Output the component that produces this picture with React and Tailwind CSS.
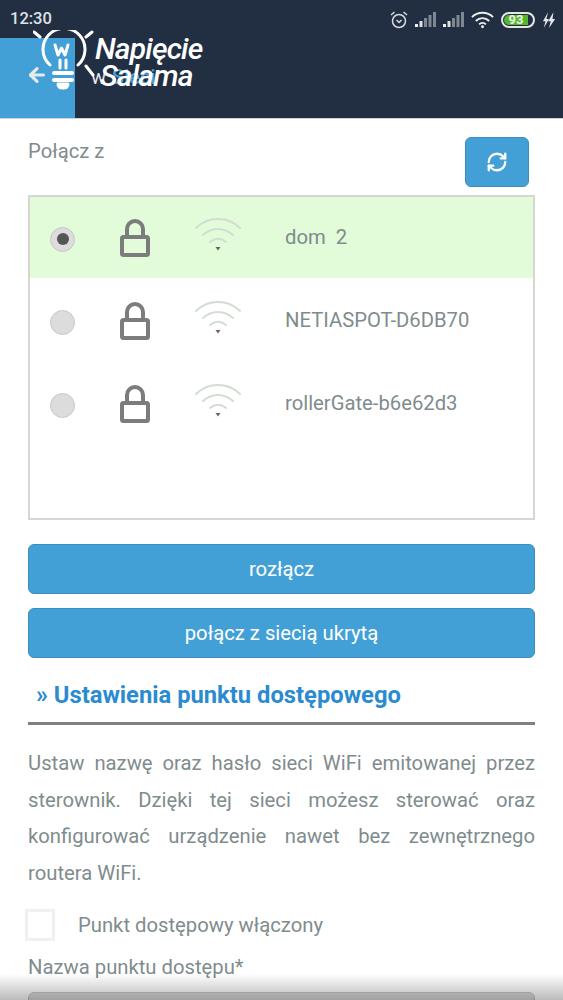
import { ArrowLeft, RefreshCw } from 'lucide-react';

const networks = [
  { name: 'dom  2', active: true },
  { name: 'NETIASPOT-D6DB70' },
  { name: 'rollerGate-b6e62d3' },
];

function Lock() {
  return (
    <svg width="30" height="38" viewBox="0 0 30 38" fill="none" stroke="#7c7c7c">
      <path d="M7 18V10a8 8 0 0 1 16 0v8" strokeWidth="4" />
      <rect x="2" y="18" width="26" height="18" rx="1.5" strokeWidth="4" />
    </svg>
  );
}

function Wifi() {
  return (
    <svg width="48" height="36" viewBox="0 0 48 36" fill="none" stroke="#d3dcd3" strokeWidth="2" strokeLinecap="round">
      <path d="M2 12C14 0 34 0 46 12" />
      <path d="M9 19c9-8 21-8 30 0" />
      <path d="M16 26c5-4 11-4 16 0" />
      <path d="M21.5 31h5l-2.5 3.5z" fill="#666" stroke="none" />
    </svg>
  );
}

function Radio({ checked }) {
  return (
    <div className="w-[25px] h-[25px] mt-[3px] rounded-full bg-[#dcdcdc] border border-[#c8c8c8] flex items-center justify-center shrink-0">
      {checked && <div className="w-[12px] h-[12px] rounded-full bg-[#555]" />}
    </div>
  );
}

function NetworkRow({ name, active }) {
  return (
    <div className={`h-[81px] mb-[2px] flex items-center pl-[20px] ${active ? 'bg-[#e2fbd9]' : 'bg-white'}`}>
      <Radio checked={active} />
      <div className="ml-[45px] w-[30px] flex">
        <Lock />
      </div>
      <div className="ml-[44px] -mt-[8px]">
        <Wifi />
      </div>
      <span className="ml-[43px] text-[20.25px] whitespace-pre text-[#7f8c8d]">{name}</span>
    </div>
  );
}

function Signal() {
  return (
    <svg width="21" height="16" viewBox="0 0 21 16" fill="#7f8792">
      <rect x="0" y="12" width="3" height="3" fill="#f0f0f0" />
      <rect x="4.5" y="9" width="3" height="6" fill="#e0e0e0" />
      <rect x="9" y="6" width="3" height="9" />
      <rect x="13.5" y="3" width="3" height="12" />
      <rect x="18" y="0" width="3" height="15" />
    </svg>
  );
}

function StatusBar() {
  return (
    <div className="h-[38px] pt-[1px] flex items-center justify-between pl-[10px] pr-[7px] text-[#dfe2e6]">
      <span className="text-[16.5px] font-medium leading-none">12:30</span>
      <div className="flex items-center gap-[7px]">
        <svg width="18" height="20" viewBox="0 0 18 20" fill="none" stroke="#d8dbe0" strokeWidth="1.5">
          <circle cx="9" cy="11" r="6.5" />
          <path d="M6.5 10l2.5 2.5L11.5 10M1 5l3.5-3M17 5l-3.5-3" />
        </svg>
        <Signal />
        <Signal />
        <svg width="23" height="20" viewBox="0 0 24 20" fill="none" stroke="#eceef0" strokeWidth="2">
          <path d="M1 7c6-6 16-6 22 0M5 11c4-4 10-4 14 0M8.5 14.5c2-2 5-2 7 0" />
          <circle cx="12" cy="17" r="1.5" fill="#eceef0" stroke="none" />
        </svg>
        <div className="w-[34px] h-[16px] rounded-full border-2 border-[#e5e8e2] p-[1px] flex">
          <div className="w-[24px] rounded-l-full bg-[#55b52f] flex items-center justify-center text-[13px] font-bold leading-none text-[#e8f5e0]">
            93
          </div>
        </div>
        <svg width="14" height="18" viewBox="0 0 16 16" fill="#e5e7ea" preserveAspectRatio="none">
          <path d="M7 1L1 9h3l-2 6 6-8H5zM13 1L7 9h3l-2 6 7-8h-3z" />
        </svg>
      </div>
    </div>
  );
}

function Header() {
  return (
    <div className="relative h-[81px] border-b border-[#cfd3d8] flex">
      <div className="w-[75px] h-[80px] bg-[#42a0d6] flex items-center pl-[26px] pb-[6px] text-[#e8eaec]">
        <ArrowLeft size={22} strokeWidth={3.5} />
      </div>
      <span className="ml-[16px] mt-[29px] text-[20px] text-[#e5e7ea] leading-none">w</span>
      <span className="ml-[6px] mt-[29px] text-[20px] text-[#42a0d6] font-medium leading-none">Sieci</span>

      {/* logo lies over the back button */}
      <div className="absolute left-[33px] -top-[8px] flex">
        <svg width="62" height="60" viewBox="0 0 62 60" fill="none" stroke="white" strokeWidth="3" strokeLinecap="round" strokeLinejoin="round">
          <path d="M17 35A21 21 0 1 1 45 35" />
          <path d="M1 2l6 5M59 2l-6 5M53 36l7 9" />
          <path d="M22 15l3 10 3.5-7 3.5 7 3-10" />
          <path d="M27 30v8M33 30v8" />
          <path d="M21 43h18M21 50h18" strokeWidth="4" />
          <path d="M25 54h10c0 3-2 4-5 4s-5-1-5-4z" fill="white" />
        </svg>
        <div className="mt-[5px] italic font-medium text-white text-[30px] leading-[27px] tracking-[-0.8px]">
          <div>Napięcie</div>
          <div className="ml-[5px]">Salama</div>
        </div>
      </div>
    </div>
  );
}

export default function App() {
  return (
    <div className="relative w-[563px] h-[1000px] overflow-hidden bg-white font-['Roboto',sans-serif] text-[#7f8c8d]">
      <div className="bg-[#222f43]">
        <StatusBar />
        <Header />
      </div>

      <div className="px-[28px]">
        <div className="flex justify-between items-start pt-[18px] h-[76px]">
          <span className="text-[20.25px] leading-[28px]">Połącz z</span>
          <button className="w-[64px] h-[50px] mr-[6px] rounded-[6px] bg-[#42a0d6] border border-[#3a8fc2] flex items-center justify-center text-white">
            <RefreshCw size={22} strokeWidth={2.5} />
          </button>
        </div>

        <div className="h-[325px] border-2 border-[#d7d6d3]">
          {networks.map((n) => (
            <NetworkRow key={n.name} name={n.name} active={n.active} />
          ))}
        </div>

        <div className="mt-[24px] flex flex-col gap-[14px]">
          <button className="h-[50px] rounded-[6px] bg-[#42a0d6] border border-[#3a8ec0] text-white text-[20.25px]">rozłącz</button>
          <button className="h-[50px] rounded-[6px] bg-[#42a0d6] border border-[#3a8ec0] text-white text-[20.25px]">połącz z siecią ukrytą</button>
        </div>

        <h2 className="mt-[22px] pl-[8px] text-[23.75px] leading-[30px] font-bold text-[#2a8bd0]">» Ustawienia punktu dostępowego</h2>
        <div className="mt-[12px] h-[3px] bg-[#808080]" />

        <p className="mt-[20px] text-[20.25px] leading-[36.5px] text-justify">
          Ustaw nazwę oraz hasło sieci WiFi emitowanej przez sterownik. Dzięki tej sieci możesz sterować oraz konfigurować urządzenie nawet bez zewnętrznego routera WiFi.
        </p>

        <label className="mt-[18px] flex items-center">
          <span className="w-[30px] h-[32px] -ml-[3px] border-[3px] border-[#f0f0f0] bg-white" />
          <span className="ml-[23px] text-[20.25px] leading-[28px]">Punkt dostępowy włączony</span>
        </label>

        <div className="mt-[12px] text-[20.25px] leading-[28px]">Nazwa punktu dostępu*</div>
        <div className="mt-[11px] h-[40px] rounded-[6px] bg-[#dcdcdc] border border-[#c8c8c8]" />
      </div>

      {/* dim shadow over the bottom edge */}
      <div className="absolute inset-x-0 bottom-0 h-[26px] bg-gradient-to-b from-transparent to-[#00000045]" />
    </div>
  );
}
